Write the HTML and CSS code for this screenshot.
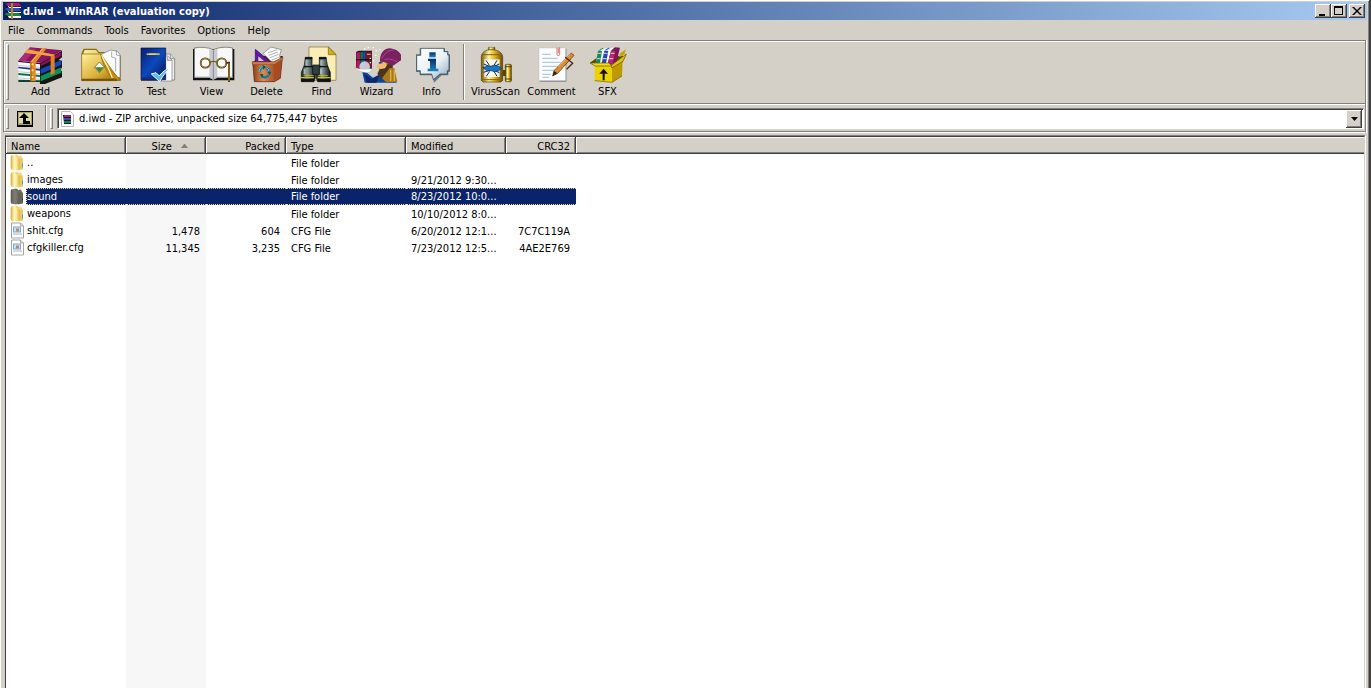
FILE: index.html
```html
<!DOCTYPE html>
<html lang="en">
<head>
<meta charset="utf-8">
<title>d.iwd - WinRAR (evaluation copy)</title>
<link rel="stylesheet" href="styles.css">
</head>
<body>
<svg class="defs" aria-hidden="true">
  <defs>
    <linearGradient id="gold"><stop offset="0" stop-color="#7a5c05"/><stop offset=".35" stop-color="#fff3a0"/><stop offset=".65" stop-color="#d9ab1c"/><stop offset="1" stop-color="#6b4b00"/></linearGradient>
    <linearGradient id="folderfill" x2="1" y2="1"><stop offset="0" stop-color="#fff2a0"/><stop offset=".6" stop-color="#dcae35"/><stop offset="1" stop-color="#8d6508"/></linearGradient>
    <linearGradient id="blue" x2="1" y2="1"><stop offset="0" stop-color="#0a1c70"/><stop offset=".5" stop-color="#0c49bd"/><stop offset="1" stop-color="#061650"/></linearGradient>
    <linearGradient id="copper"><stop offset="0" stop-color="#8a3c12"/><stop offset=".35" stop-color="#e08a55"/><stop offset="1" stop-color="#7c2e08"/></linearGradient>
    <linearGradient id="steel"><stop offset="0" stop-color="#10181a"/><stop offset=".4" stop-color="#8fa09f"/><stop offset="1" stop-color="#0c1214"/></linearGradient>
    <linearGradient id="silver" x2="1" y2="1"><stop offset="0" stop-color="#ffffff"/><stop offset=".55" stop-color="#e9f0f6"/><stop offset="1" stop-color="#8da4b8"/></linearGradient>
    <linearGradient id="info" x2="0" y2="1"><stop offset="0" stop-color="#0a2c66"/><stop offset="1" stop-color="#1d87c4"/></linearGradient>
    <linearGradient id="tabfold"><stop offset="0" stop-color="#e3bd4c"/><stop offset=".5" stop-color="#fff6b8"/><stop offset="1" stop-color="#e2c257"/></linearGradient>
    <symbol id="folder" viewBox="0 0 16 16">
      <path d="M1 1l5-1 2 1v14l-2 1-5-1z" fill="url(#tabfold)"/>
      <path d="M6 2l5-1 1 2v12l-4 1-2-2z" fill="#f3d877"/>
      <path d="M9 4h4v11H9z" fill="#e9c960"/>
      <path d="M6 3v12" stroke="#fff8cf" fill="none"/>
      <path d="M9 4v11M1 2v12" stroke="#cfa53a" stroke-width=".6" fill="none"/>
      <path d="M12 9h1v4h-1z" fill="#4b9be0"/>
    </symbol>
    <symbol id="cfg" viewBox="0 0 16 16">
      <path d="M1.500.5h9l3 3v12h-12z" fill="#fff" stroke="#a4a4a4"/>
      <path d="M10.500.5v3h3" fill="#ddd" stroke="#aaa"/>
      <path d="M3 4h8v6H3z" fill="#7ea9da"/><path d="M4 5h6v4H4z" fill="#c3e0f7"/>
      <path d="M6 6h3v3H6z" fill="#b98a6d"/><path d="M3 11h9v1H3z" fill="#9ab3cc"/>
    </symbol>
    <symbol id="books" viewBox="0 0 16 16">
      <path d="M2 0h12l2 3H3L1 2z" fill="#b01873"/><path d="M3 3h13v2H4z" fill="#fff"/>
      <path d="M1 5h13l2 3H3L0 7z" fill="#2553c4"/><path d="M3 8h13v2H4z" fill="#fff"/>
      <path d="M1 10h13l2 3H3l-3-1z" fill="#118a3c"/><path d="M3 13h13v2H4z" fill="#fff"/>
      <path d="M0 2l3 1v2L1 4zM0 7l3 1v2L1 9zM0 12l3 1v3l-2-2z" fill="#171717"/>
      <path d="M4 3h12v1H4zM4 8h12v1H4zM4 15h12v1H4z" fill="#40202d"/>
      <path d="M6 0h2v16H6z" fill="#b98534"/>
    </symbol>
  </defs>
</svg>

<div class="window">
  <header class="titlebar">
    <svg class="app-icon" aria-hidden="true"><use href="#books"/></svg>
    <h1 class="title">d.iwd - WinRAR (evaluation copy)</h1>
    <div class="controls">
      <button class="control" type="button" aria-label="Minimize"><svg viewBox="0 0 12 10" aria-hidden="true"><path d="M2 8h6v2H2z"/></svg></button>
      <button class="control" type="button" aria-label="Maximize"><svg viewBox="0 0 12 10" aria-hidden="true"><path fill-rule="evenodd" d="M1 0h9v9H1zM2 2v6h7V2z"/></svg></button>
      <button class="control close" type="button" aria-label="Close"><svg viewBox="0 0 12 10" aria-hidden="true"><path d="M1 1h2l3 3 3-3h2L7 5l4 4H9L6 6 3 9H1l4-4z"/></svg></button>
    </div>
  </header>

  <nav class="menu" aria-label="Main menu">
    <button type="button">File</button>
    <button type="button">Commands</button>
    <button type="button">Tools</button>
    <button type="button">Favorites</button>
    <button type="button">Options</button>
    <button type="button">Help</button>
  </nav>

  <div class="bars">
    <div class="toolbar">
      <span class="grip"></span>
      <button class="tool add" type="button">
        <svg viewBox="48 18 147 114" aria-hidden="true">
          <path d="M118 70l68-38v20l-10 8 10 3v20l-10 8 10 3v18l-66 26z" fill="#151515"/>
          <path d="M122 72l62-36v12l-62 30z" fill="#8a1459"/>
          <path d="M122 88l62-28v14l-62 28z" fill="#1746c0"/>
          <path d="M122 108l62-26v16l-62 26z" fill="#119055"/>
          <path d="M55 62L90 22l97 9-67 40z" fill="#8b1660"/><path d="M55 62l33-37 20 2-32 37z" fill="#a82b7c"/>
          <path d="M55 62l65 6v56l-65-2z" fill="#fafafa"/>
          <path d="M55 62l65 7v4l-65-7z" fill="#4c0a35"/>
          <path d="M55 80l65 6v6l-65-7z" fill="#17388f"/><path d="M55 99l65 6v6l-65-6z" fill="#0d7545"/><path d="M55 119l65 2v5H55z" fill="#084632"/>
          <path d="M55 76l65 6M55 95l65 6M55 114l65 4" stroke="#abb4bd" stroke-width="2" fill="none"/>
          <path d="M91 65l36-41 13 1-33 43v56H91z" fill="#e58a24"/><path d="M94 66l35-41" stroke="#ffc870" stroke-width="3"/>
          <path d="M91 65h4v59h-4z" fill="#b9630d"/>
          <path d="M73 38l79 10v57l12-5V44L84 28z" fill="#de8222"/><path d="M73 38l79 10 12-4-80-14z" fill="#f0a648"/>
          <g fill="#ffe789" stroke="#9c5505"><circle cx="98" cy="73" r="4"/><circle cx="98" cy="91" r="4"/><circle cx="98" cy="111" r="4"/></g>
        </svg>
        <span>Add</span>
      </button>
      <button class="tool extract" type="button">
        <svg viewBox="222 18 147 114" aria-hidden="true">
          <path d="M242 38l6-12h38l8 10h55l10 12v74H242z" fill="#8a6a10"/>
          <path d="M247 40l4-10h34l8 10h52v80h-98z" fill="url(#folderfill)"/>
          <path d="M302 42l28-12 19 4 8 10v68l-22 6z" fill="#fbfbfb" stroke="#777" stroke-width="2"/>
          <path d="M346 31v14l11 2M332 35v16l12 3v40" fill="none" stroke="#7d8793" stroke-width="2"/>
          <path d="M242 42h57l52 73-3 7H242z" fill="url(#folderfill)" stroke="#86620b" stroke-width="2"/>
          <path d="M299 42c6 22 13 36 22 40l38 38h-14c-18-5-41-42-46-78z" fill="#c68a14" stroke="#614008"/>
          <path d="M302 44c7 22 20 34 32 70" fill="none" stroke="#fff19d" stroke-width="4"/>
          <path d="M280 83l15-17 15 15-15 17z" fill="#fff" stroke="#375219" stroke-width="2"/><path d="M281 82h28l-14 15z" fill="#3f8a28"/>
          <path d="M242 116h105v6H242z" fill="#765107"/>
        </svg>
        <span>Extract To</span>
      </button>
      <button class="tool" type="button">
        <svg viewBox="15 18 147 114" aria-hidden="true">
          <path d="M102 42h28l13 14v64h-41z" fill="#eee" stroke="#666" stroke-width="2"/>
          <path d="M96 48h26l13 12v63H96z" fill="#fff" stroke="#777" stroke-width="2"/><path d="M121 49v12h14M130 43v13h13" fill="#d4dbe1" stroke="#777" stroke-width="2"/>
          <path d="M42 24h74v95H42z" fill="url(#blue)" stroke="#050d3d" stroke-width="2"/><path d="M43 111h72v7H43z" fill="#12318e"/>
          <path d="M42 119h62v3H42z" fill="#001030"/>
          <path d="M59 40h39v5H59z" fill="#e2bd2f"/><path d="M66 41h20v2H66z" fill="#fff9b0"/>
          <path d="M73 102l14-4 10 10c10-14 20-20 33-25-14 13-23 25-32 42z" fill="#57bdf2" stroke="#fff" stroke-width="3"/>
        </svg>
        <span>Test</span>
      </button>
      <button class="tool" type="button">
        <svg viewBox="180 18 147 114" aria-hidden="true">
          <path d="M198 27h124v94H198z" fill="#111"/>
          <path d="M202 24c20-4 42-2 57 5 18-8 40-9 58-5v88H202z" fill="#f8f8f8" stroke="#555" stroke-width="2"/>
          <path d="M247 26l12 5 12-5v87l-12 6-12-6z" fill="#c7cbd0"/><path d="M259 31v87" stroke="#656565" stroke-width="2"/>
          <path d="M202 112h45l12 6 12-6h46" fill="none" stroke="#a9a9a9" stroke-width="3"/>
          <g fill="#fff" fill-opacity=".5" stroke="#352508" stroke-width="5"><circle cx="235" cy="69" r="14"/><circle cx="284" cy="69" r="14"/></g>
          <g fill="none" stroke="#ddb640" stroke-width="2"><circle cx="235" cy="69" r="14"/><circle cx="284" cy="69" r="14"/></g>
          <path d="M249 68c3-5 17-5 21 0" fill="none" stroke="#765b16" stroke-width="4"/>
          <path d="M298 68h8v58" fill="none" stroke="#4b3207" stroke-width="6"/><path d="M306 70v54" stroke="#e9c74b" stroke-width="2"/>
        </svg>
        <span>View</span>
      </button>
      <button class="tool" type="button">
        <svg viewBox="15 18 147 114" aria-hidden="true">
          <path d="M48 66l26-18h64l-9 19z" fill="#461e0b"/>
          <path d="M55 28l48 40H55z" fill="#6118a5" stroke="#2b075c" stroke-width="2"/><path d="M64 49l17 14H64z" fill="#d4d0c8"/>
          <path d="M78 40l24-19 31 8-5 17 5 17-26 6z" fill="#fafafa" stroke="#777" stroke-width="2"/>
          <path d="M92 39l28-10M95 46l28-10M99 53l26-10M104 60l26-10" stroke="#8b929c" stroke-width="2"/>
          <path d="M47 66h63l26-13-6 62-18 10H52z" fill="url(#copper)" stroke="#53200a" stroke-width="2"/>
          <path d="M110 67l25-13-6 60-17 10z" fill="#a84b20"/><path d="M45 65h66l27-14v6l-26 17H47z" fill="#ce794b" stroke="#522007"/>
          <g fill="none" stroke="#0a8199" stroke-width="7"><path d="M67 97c0-9 4-14 12-16"/><path d="M86 84c8 2 11 7 11 13"/><path d="M95 105c-4 8-14 9-22 3"/></g>
          <path d="M76 74l11 6-8 9zM91 97l12-2-5 11zM68 103l11-1-3 12z" fill="#0b536d"/>
          <path d="M66 96c0-9 4-14 11-16M88 84c5 1 7 5 8 9" fill="none" stroke="#b5edf0" stroke-width="2"/>
        </svg>
        <span>Delete</span>
      </button>
      <button class="tool" type="button">
        <svg viewBox="180 18 147 114" aria-hidden="true">
          <path d="M216 21h59l22 22v78h-81z" fill="#faedb5" stroke="#846c1e" stroke-width="2"/><path d="M274 21v23h23z" fill="#d8ac18" stroke="#7b6110" stroke-width="2"/>
          <path d="M205 52h20v28h10v35l-4 10h-38V97l9-22z" fill="url(#steel)" stroke="#0b1011" stroke-width="2"/>
          <path d="M247 52h20l4 23 9 22v28h-38l-4-10V80h9z" fill="url(#steel)" stroke="#0b1011" stroke-width="2"/>
          <path d="M227 75h20v28h-20z" fill="#30413f" stroke="#090e10" stroke-width="2"/>
          <path d="M204 52h22v6h-22zM246 52h22v6h-22zM201 78h25v4h-25zM248 78h25v4h-25z" fill="#0c1010"/>
          <path d="M192 111h39v4h-39zM242 111h38v4h-38zM202 106h28v2h-28zM244 106h28v2h-28z" fill="#d6ba16"/>
          <path d="M193 116h38v9h-38zM242 116h38v9h-38z" fill="#111"/><path d="M206 61h5v14h-5zM250 61h5v14h-5zM200 86h6v17h-6zM249 86h6v17h-6z" fill="#a4b8b6"/>
        </svg>
        <span>Find</span>
      </button>
      <button class="tool" type="button">
        <svg viewBox="15 18 147 114" aria-hidden="true">
          <path d="M27 36l8-4h40v54H27z" fill="#231321"/>
          <path d="M28 37h11v48H28z" fill="#b51958"/><path d="M40 36h9v48h-9z" fill="#0c7062"/><path d="M49 35h7v48h-7z" fill="#24479c"/><path d="M57 35h18v49H57z" fill="#6f182d"/>
          <path d="M27 57h48v4H27z" fill="#241116"/>
          <path d="M60 41h11v4H60z" fill="#c0a354"/>
          <circle cx="53" cy="80" r="16" fill="#f5f7ff" opacity=".75"/>
          <path d="M21 82l17 5 15 1 23-2c-4 9-11 13-20 13l-21-7z" fill="#f8f8f8" stroke="#999"/>
          <path d="M46 97l14 1 18 15 24-12 45 15 2 12H53z" fill="#10459c"/><path d="M52 101l22 16 23-12-9 23H59z" fill="#0a276f"/>
          <path d="M101 58l36 13-2 29-17 8-23-16z" fill="#c17c36"/>
          <path d="M101 58L88 82l11 3-2 8 16 13 11-14-8-24z" fill="#f2bd71"/>
          <path d="M98 88l16-3 14-22 10 18-15 29-22 7-10-16z" fill="#4a3420"/>
          <path d="M128 84h14l9 42h-34l-12-11z" fill="#a9791b"/><path d="M131 89v34M142 91v32" stroke="#e1b346" stroke-width="4"/>
          <path d="M99 57c3-27 22-37 40-30 15 2 27 17 26 32l-28 19c-12-9-23-13-38-13z" fill="#7b2162"/><path d="M105 55c8-15 18-24 35-25M113 59c13-4 25-1 38 7" fill="none" stroke="#a84a8a" stroke-width="3"/>
          <path d="M95 67l9-2 4 4-12 3z" fill="#244a92"/>
          <g fill="#fff"><path d="M51 25h4v4h-4zM62 21h4v4h-4zM77 21h4v4h-4zM86 30h4v4h-4zM97 27h4v4h-4zM84 44h4v4h-4zM78 60h4v4h-4zM68 66h4v4h-4zM68 53h4v4h-4z"/></g>
        </svg>
        <span>Wizard</span>
      </button>
      <button class="tool" type="button">
        <svg viewBox="180 18 147 114" aria-hidden="true">
          <path d="M218 25h76v9h10v9h5v53h-5v10h-20l-23 22-5-22h-38v-10h-11V43h11z" fill="#667785"/>
          <path d="M221 25h70v10h11v10h4v47h-5v10h-22l-20 17-5-17h-34V92h-11V46h12z" fill="url(#silver)" stroke="#17384e" stroke-width="2"/>
          <path d="M247 37h19v15h-19z" fill="url(#info)"/><path d="M243 56h24v30h7v8h-32v-8h7V63h-6z" fill="url(#info)"/>
        </svg>
        <span>Info</span>
      </button>
      <span class="divider"></span>
      <button class="tool" type="button">
        <svg viewBox="39 18 147 114" aria-hidden="true">
          <path d="M91 22h20v9H91z" fill="url(#gold)" stroke="#413000"/><path d="M70 50c1-14 13-21 31-21s32 8 33 21v71l-5 5H75l-5-5z" fill="url(#gold)" stroke="#523d04" stroke-width="2"/>
          <path d="M72 44h60M71 119h62" stroke="#846310" stroke-width="3"/><path d="M79 58h46v53H79z" fill="#fff" opacity=".85"/>
          <path d="M84 61l10 15M117 61l-9 15M77 72l19 8M124 72l-17 8M76 97l20-6M124 98l-18-8M85 109l10-15M117 109l-9-15" stroke="#063272" stroke-width="3"/>
          <path d="M74 83l15-5h11l10-3 12 4 8 6-8 7-13 3-9-3H87z" fill="#1c75c5" stroke="#092855" stroke-width="2"/>
          <path d="M134 90h11v18h-11z" fill="#574315"/><rect x="142" y="73" width="18" height="52" rx="3" fill="url(#gold)" stroke="#433204" stroke-width="2"/><path d="M141 80h20M141 117h20" stroke="#584009" stroke-width="3"/>
        </svg>
        <span>VirusScan</span>
      </button>
      <button class="tool comment" type="button">
        <svg viewBox="207 18 147 114" aria-hidden="true">
          <path d="M245 26h80v99h-80z" fill="#777"/><path d="M243 24h80v98h-80z" fill="#fafcff" stroke="#aab4bf"/>
          <path d="M253 43h25M253 55h46M253 67h55M253 79h55M253 91h46M253 103h25M253 112h20" stroke="#78a1c0" stroke-width="2"/>
          <path d="M297 23v20c0 5 8 5 8 0V22M301 25v15" fill="none" stroke="#ca3434" stroke-width="2"/>
          <path d="M340 39l8 7-49 54-15 8 4-16z" fill="#e18a2b" stroke="#4c2309" stroke-width="2"/><path d="M337 43l-36 38" stroke="#ffd389" stroke-width="2"/>
          <path d="M322 52l22 18-18 18" fill="none" stroke="#4e2609" stroke-width="4"/><path d="M284 107l4-14 10 7z" fill="#222"/>
        </svg>
        <span>Comment</span>
      </button>
      <button class="tool" type="button">
        <svg viewBox="375 18 147 114" aria-hidden="true">
          <path d="M396 68l28-20h78l-11 23-30 8z" fill="#5c4a00"/>
          <path d="M413 70l7-37 14-9 12 1-12 45z" fill="#fff"/><path d="M413 70l7-37h12l-6 37z" fill="#128a66"/>
          <path d="M431 70l8-38 14-9 12 1-13 46z" fill="#fff"/><path d="M431 70l8-38h12l-7 38z" fill="#2447bd"/>
          <path d="M449 71l10-39 12-10 15 1-12 48z" fill="#7d1454"/><path d="M449 71l10-39h13l-8 39z" fill="#b0247c"/>
          <path d="M420 32l13-8h12l-12 8zM439 31l13-8h12l-12 8z" fill="#e9eef2"/><path d="M420 32l13-8h5l-12 8z" fill="#128a66"/><path d="M439 31l13-8h5l-12 8z" fill="#2447bd"/>
          <path d="M419 40h11M417 56h11M438 40h11M435 56h11M458 40h12M454 56h12" stroke="#e8d8a0" stroke-width="3"/>
          <path d="M410 74h52v53l-52-5z" fill="#ecd200"/><path d="M462 75l32-16-2 49-30 19z" fill="#bf9900"/>
          <path d="M396 69h57l8 9h-49z" fill="#f4dc13" stroke="#665100" stroke-width="2"/><path d="M461 75l31-23 13-10-10 22-34 20z" fill="#e0c218" stroke="#6a5200" stroke-width="2"/><path d="M486 40l18-12-5 16-16 8z" fill="#c7a400"/>
          <path d="M410 122l52 5 30-19" fill="none" stroke="#705900" stroke-width="2"/>
          <path d="M437 86l13 15h-10v20h-6v-20h-10z" fill="#161200"/>
        </svg>
        <span>SFX</span>
      </button>
    </div>

    <div class="address">
      <span class="grip"></span>
      <button class="up" type="button" aria-label="Up one level">
        <svg viewBox="0 0 16 16" aria-hidden="true"><path d="M0 0h16v16H0z" fill="#000"/><path d="M1 1h14v13H1z" fill="#a9a36b"/><path d="M2 2h12v10H2z" fill="#dcd8a4"/><path d="M7 2l5 5H9v3h4v3H6V7H2z" fill="#000"/></svg>
      </button>
      <span class="groove"></span>
      <span class="grip"></span>
      <div class="combo">
        <svg class="combo-icon" viewBox="0 0 16 16" aria-hidden="true">
          <path d="M1.500.5h9l3 3v12h-12z" fill="#fff" stroke="#b8b8b8"/><path d="M4 4h7v3H4z" fill="#b51c62"/><path d="M4 7h7v3H4z" fill="#2851b0"/><path d="M4 10h7v2H4z" fill="#158350"/><path d="M3 4h1v9h7v-1H4M4 6h7v1H4zM4 9h7v1H4z" fill="#1c1c1c"/>
        </svg>
        <select aria-label="Current archive"><option>d.iwd - ZIP archive, unpacked size 64,775,447 bytes</option></select>
        <span class="combo-arrow"><svg viewBox="0 0 7 4" aria-hidden="true"><path d="M0 0h7L3.500 4z"/></svg></span>
      </div>
    </div>
  </div>

  <main class="list">
    <table>
      <colgroup><col class="c-name"><col class="c-size"><col class="c-packed"><col class="c-type"><col class="c-modified"><col class="c-crc"><col></colgroup>
      <thead>
        <tr>
          <th scope="col">Name</th>
          <th scope="col" class="num sorted" aria-sort="ascending">Size <svg viewBox="0 0 7 4" aria-hidden="true"><path d="M3 0h1l3 4H0z"/></svg></th>
          <th scope="col" class="num">Packed</th>
          <th scope="col">Type</th>
          <th scope="col">Modified</th>
          <th scope="col" class="num">CRC32</th>
          <td class="rest"></td>
        </tr>
      </thead>
      <tbody>
        <tr><td class="name"><div><svg aria-hidden="true"><use href="#folder"/></svg><span>..</span></div></td><td></td><td></td><td>File folder</td><td></td><td></td><td></td></tr>
        <tr><td class="name"><div><svg aria-hidden="true"><use href="#folder"/></svg><span>images</span></div></td><td></td><td></td><td>File folder</td><td>9/21/2012 9:30...</td><td></td><td></td></tr>
        <tr class="selected"><td class="name"><div><svg aria-hidden="true"><use href="#folder"/></svg><span>sound</span></div></td><td></td><td></td><td>File folder</td><td>8/23/2012 10:0...</td><td></td><td></td></tr>
        <tr><td class="name"><div><svg aria-hidden="true"><use href="#folder"/></svg><span>weapons</span></div></td><td></td><td></td><td>File folder</td><td>10/10/2012 8:0...</td><td></td><td></td></tr>
        <tr><td class="name"><div><svg aria-hidden="true"><use href="#cfg"/></svg><span>shit.cfg</span></div></td><td class="num">1,478</td><td class="num">604</td><td>CFG File</td><td>6/20/2012 12:1...</td><td class="num">7C7C119A</td><td></td></tr>
        <tr><td class="name"><div><svg aria-hidden="true"><use href="#cfg"/></svg><span>cfgkiller.cfg</span></div></td><td class="num">11,345</td><td class="num">3,235</td><td>CFG File</td><td>7/23/2012 12:5...</td><td class="num">4AE2E769</td><td></td></tr>
        <tr class="filler"><td></td><td></td><td></td><td></td><td></td><td></td><td></td></tr>
      </tbody>
    </table>
  </main>
</div>
</body>
</html>
```
FILE: styles.css
```css
:root {
  --face: #d4d0c8;
  --shadow: #808080;
  --dark: #404040;
  --navy: #0a246a;
}

* { box-sizing: border-box; }

body {
  margin: 0;
  background: var(--face);
  color: #000;
  font: 11px/14px "DejaVu Sans Condensed", Tahoma, "DejaVu Sans", sans-serif;
}

button, select {
  margin: 0;
  padding: 0;
  border: 0;
  background: none;
  color: inherit;
  font: inherit;
}

svg { display: block; }
.defs { position: absolute; width: 0; height: 0; }

.window {
  display: flex;
  flex-direction: column;
  height: 100vh;
  padding: 2px 2px 0;
  border-left: 1px solid #fff;
  border-right: 2px solid var(--dark);
  box-shadow: inset 0 1px #fff, inset -1px 0 var(--shadow);
}

/* Title bar */
.titlebar {
  display: flex;
  align-items: center;
  height: 18px;
  padding: 0 2px;
  background: linear-gradient(90deg, #0a246a, #a6caf0);
  color: #fff;
}
.app-icon { width: 16px; height: 16px; }
.title {
  flex: 1;
  margin: 0 0 0 2px;
  padding-top: 1px;
  font-size: 11px;
  font-weight: bold;
}
.controls { display: flex; }
.control {
  display: grid;
  place-items: center;
  width: 16px;
  height: 14px;
  background: var(--face);
  box-shadow: inset -1px -1px var(--dark), inset 1px 1px #fff, inset -2px -2px var(--shadow);
}
.control svg { width: 12px; height: 10px; }
.close { margin-left: 2px; }

/* Menu */
.menu { display: flex; height: 20px; padding: 1px 0 0 2px; }
.menu button { padding: 0 6px; }
.menu button:first-child { padding-left: 3px; }

/* Tool bars */
.bars {
  margin-right: 1px;
  border: 1px solid var(--shadow);
  border-bottom-color: #fff;
  box-shadow: inset 1px 1px #fff, 1px 0 #fff;
}
.toolbar {
  display: flex;
  height: 63px;
  padding: 3px 0 3px 2px;
  border-bottom: 1px solid var(--shadow);
}
.grip {
  width: 3px;
  border: 1px solid;
  border-color: #fff var(--shadow) var(--shadow) #fff;
}
.toolbar .grip { margin-right: 3px; }
.tool {
  display: flex;
  flex-direction: column;
  gap: 1px;
  align-items: center;
  width: 55px;
  padding-top: 2px;
  white-space: nowrap;
}
.tool svg { width: 49px; height: 38px; }
.add, .comment { width: 57px; }
.extract { width: 60px; }
.divider {
  width: 2px;
  margin: 0 3px 0 4px;
  border-left: 1px solid var(--shadow);
  border-right: 1px solid #fff;
}

.address {
  display: flex;
  height: 28px;
  padding: 3px 1px 2px 2px;
  border-top: 1px solid #fff;
  border-bottom: 1px solid var(--shadow);
}
.up { padding: 0 12px 0 8px; }
.up svg { width: 16px; height: 16px; }
.groove {
  width: 2px;
  margin: -3px 3px -2px 0;
  border-left: 1px solid var(--shadow);
  border-right: 1px solid #fff;
}
.combo {
  display: flex;
  flex: 1;
  align-items: center;
  margin-left: 4px;
  padding: 1px 1px 1px 2px;
  border: 1px solid;
  border-color: var(--shadow) #fff #fff var(--shadow);
  background: #fff;
  box-shadow: inset 1px 1px var(--dark);
}
.combo-icon { width: 16px; height: 16px; }
.combo select {
  flex: 1;
  height: 18px;
  margin-left: 3px;
  padding-top: 1px;
  appearance: none;
}
.combo-arrow {
  display: grid;
  place-items: center;
  width: 16px;
  height: 18px;
  background: var(--face);
  box-shadow: inset -1px -1px var(--dark), inset 1px 1px #fff, inset -2px -2px var(--shadow);
  pointer-events: none;
}
.combo-arrow svg { width: 7px; height: 4px; }

/* File list */
.list {
  flex: 1;
  min-height: 0;
  margin: 3px 2px 0;
  border: 1px solid var(--dark);
  border-width: 1px 1px 0;
  border-right-color: var(--face);
  background: #fff;
  box-shadow: 0 -1px var(--shadow), 1px 0 #fff;
}
table {
  width: 100%;
  height: 100%;
  border-collapse: separate;
  border-spacing: 0;
  table-layout: fixed;
}
.c-name, .c-type { width: 120px; }
.c-size, .c-packed { width: 80px; }
.c-size { background: #f7f7f7; }
.c-modified { width: 100px; }
.c-crc { width: 70px; }

th, .rest {
  height: 17px;
  padding: 2px 6px 0 5px;
  background: var(--face);
  box-shadow: inset -1px -1px var(--dark), inset 1px 1px #fff, inset -2px -2px var(--shadow);
  font-weight: normal;
  text-align: left;
}
.rest { box-shadow: inset 0 -1px var(--dark), inset 1px 1px #fff, inset 0 -2px var(--shadow); }
.sorted { padding-right: 18px; }
.sorted svg {
  display: inline-block;
  width: 7px;
  height: 4px;
  margin: 0 0 2px 6px;
  fill: var(--shadow);
}
tbody td {
  height: 17px;
  padding: 2px 6px 0 5px;
  overflow: hidden;
  white-space: nowrap;
}
.num { text-align: right; }
tbody .name { padding: 0; }
.name div { display: flex; padding-left: 4px; }
.name svg { width: 16px; height: 17px; }
.name span { flex: 1; height: 17px; padding: 2px 0 0 1px; }
.filler td { height: auto; }

.selected { color: #fff; }
.selected td:not(.name):not(:last-child),
.selected .name span {
  border: 0 dotted #f5db95;
  border-width: 1px 0;
  padding-top: 1px;
  background: var(--navy);
}
.selected .name span { border-left-width: 1px; padding-left: 0; }
.selected td:nth-child(6) { border-right-width: 1px; }
.selected .name svg { filter: grayscale(.8) brightness(.5); }
```
